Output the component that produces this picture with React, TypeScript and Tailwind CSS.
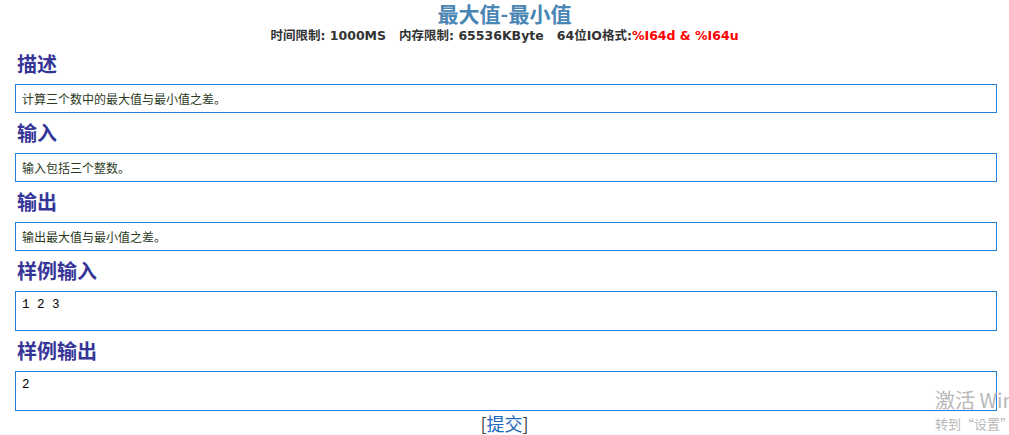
import React from 'react';

// Problem sections shown under the header
interface Section {
  title: string;
  body: string;
  pre?: boolean;
}

const sections: Section[] = [
  { title: '描述', body: '计算三个数中的最大值与最小值之差。' },
  { title: '输入', body: '输入包括三个整数。' },
  { title: '输出', body: '输出最大值与最小值之差。' },
  { title: '样例输入', body: '1 2 3', pre: true },
  { title: '样例输出', body: '2', pre: true },
];

const cjk = "font-['Noto_Sans_CJK_SC',sans-serif]";

const App = () => {
  return (
    <div className={`relative w-[1009px] h-[435px] overflow-hidden bg-white ${cjk}`}>
      {/* Header */}
      <div className="flex flex-col items-center h-[44px]">
        <h1 className="h-[26px] flex items-center text-[21px] leading-[25px] font-bold text-[#4a86b4]">最大值-最小值</h1>
        <div className="h-[18px] flex items-center pt-[1px] font-['DejaVu_Sans','Noto_Sans_CJK_SC',sans-serif] text-[12.5px] leading-[18px] font-bold text-[#333] whitespace-pre">
          时间限制: 1000MS   内存限制: 65536KByte   64位IO格式:<span className="text-[#ff0000]">%I64d &amp; %I64u</span>
        </div>
      </div>

      {/* Sections */}
      <div className="flex flex-col pl-[15px]">
        {sections.map((s) => (
          <div key={s.title} className="flex flex-col">
            <div className="h-[40px] flex items-center pl-[2px] text-[20px] font-bold text-[#363699]">{s.title}</div>
            {s.pre ? (
              <pre className="w-[982px] h-[40px] border border-[#2480e0] px-[6px] pt-[5px] font-['Liberation_Mono',monospace] text-[12.5px] leading-[16px] text-black">
                {s.body}
              </pre>
            ) : (
              <div className="w-[982px] h-[29px] border border-[#2480e0] px-[6px] flex items-center text-[12px] text-[#2b3a1c]">
                {s.body}
              </div>
            )}
          </div>
        ))}
      </div>

      {/* Submit link */}
      <div className="flex justify-center h-[24px] items-center text-[18px] leading-[22px]">
        <span className="text-[#444]">[</span>
        <a href="#" className="text-[#1a66c0]">提交</a>
        <span className="text-[#444]">]</span>
      </div>

      {/* OS activation watermark over the page */}
      <div className="absolute left-[935px] top-[387px] whitespace-nowrap text-[#b8b8b8] pointer-events-none">
        <div className="text-[20px] leading-[26px]">激活 Windows</div>
        <div className="text-[13px] leading-[18px] mt-[2px]">转到“设置”以激活Windows。</div>
      </div>
    </div>
  );
};

export default App;
